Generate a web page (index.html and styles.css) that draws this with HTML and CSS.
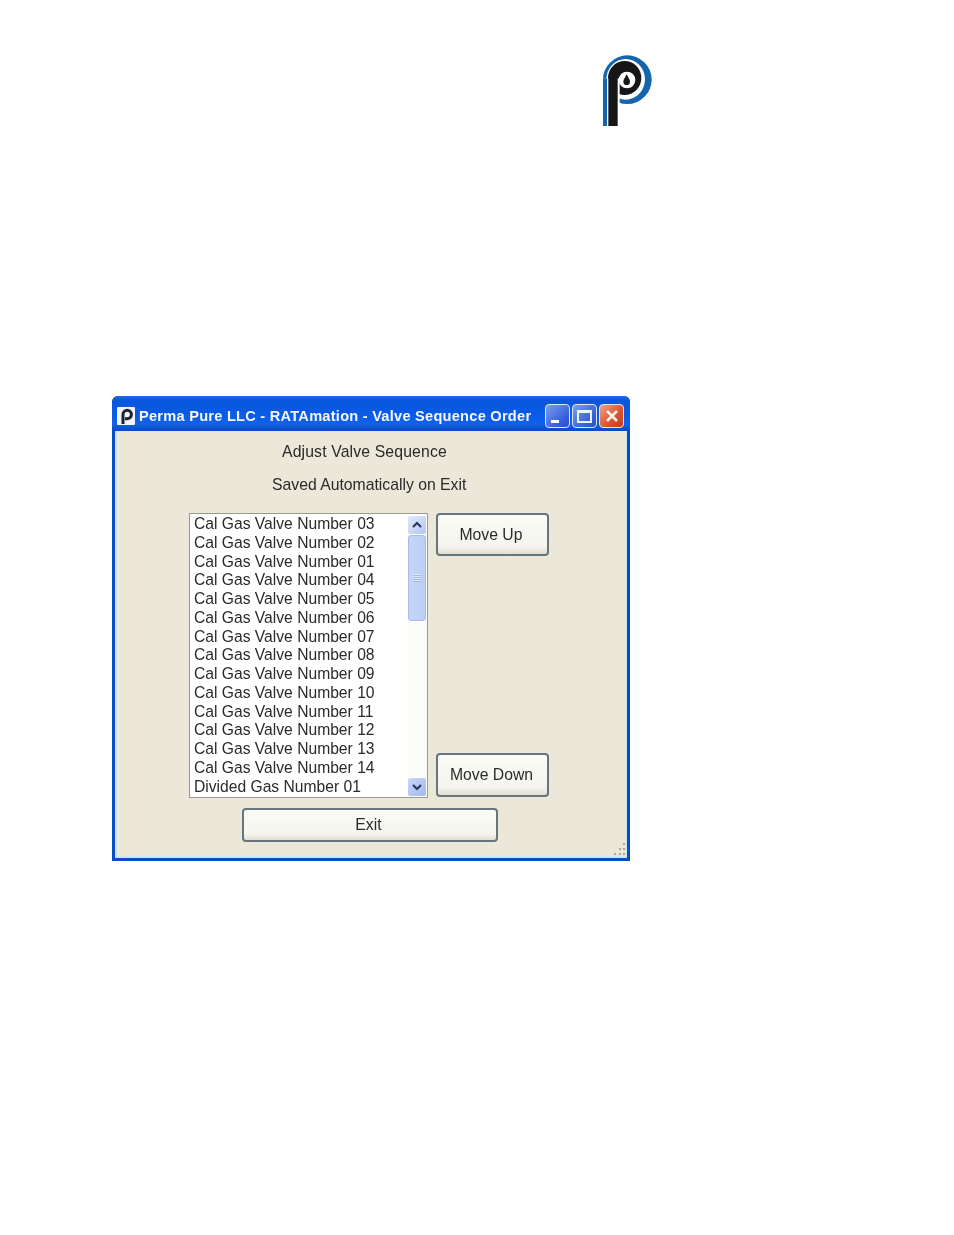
FILE: index.html
```html
<!DOCTYPE html>
<html lang="en">
<head>
<meta charset="utf-8">
<title>Perma Pure LLC - RATAmation - Valve Sequence Order</title>
<link rel="stylesheet" href="styles.css">
</head>
<body>
<div class="page">
  <svg class="logo" viewBox="0 0 225 270" width="75" height="90" aria-label="Perma Pure logo">
    <circle class="l-blue" cx="112" cy="104" r="73"/>
    <ellipse class="l-white" cx="107" cy="103" rx="58" ry="61"/>
    <ellipse class="l-black" cx="104" cy="99" rx="50" ry="51"/>
    <circle class="l-white" cx="111" cy="105" r="25"/>
    <rect class="l-white" x="39" y="100" width="50" height="143"/>
    <rect class="l-blue" x="39" y="100" width="12" height="143"/>
    <rect class="l-black" x="55" y="96" width="28" height="147"/>
    <path class="l-black" d="M110 88C104 100 100 105 100 110A10 10 0 0 0 120 110C120 105 116 100 110 88Z"/>
  </svg>
  <div class="window">
    <div class="titlebar">
      <svg class="app-icon" viewBox="0 0 18 18" width="18" height="18">
        <rect width="18" height="18" rx="1" fill="#f1f4f8"/>
        <path d="M6 17V7.5A4.2 4.2 0 1 1 10.2 11.7H8" fill="none" stroke="#1b2130" stroke-width="3"/>
      </svg>
      <span class="title">Perma Pure LLC - RATAmation - Valve Sequence Order</span>
      <div class="controls">
        <span class="ctl ctl-min"><i class="min-glyph"></i></span>
        <span class="ctl ctl-max"><i class="max-glyph"></i></span>
        <span class="ctl ctl-close">
          <svg viewBox="0 0 14 14" width="14" height="14"><path d="M2 2L12 12M12 2L2 12" stroke="#f8f2ec" stroke-width="2.6" fill="none"/></svg>
        </span>
      </div>
    </div>
    <div class="content">
      <p class="label label-a">Adjust Valve Sequence</p>
      <p class="label label-b">Saved Automatically on Exit</p>
      <div class="main">
        <div class="listbox">
          <ul class="items">
            <li>Cal Gas Valve Number 03</li>
            <li>Cal Gas Valve Number 02</li>
            <li>Cal Gas Valve Number 01</li>
            <li>Cal Gas Valve Number 04</li>
            <li>Cal Gas Valve Number 05</li>
            <li>Cal Gas Valve Number 06</li>
            <li>Cal Gas Valve Number 07</li>
            <li>Cal Gas Valve Number 08</li>
            <li>Cal Gas Valve Number 09</li>
            <li>Cal Gas Valve Number 10</li>
            <li>Cal Gas Valve Number 11</li>
            <li>Cal Gas Valve Number 12</li>
            <li>Cal Gas Valve Number 13</li>
            <li>Cal Gas Valve Number 14</li>
            <li>Divided Gas Number 01</li>
          </ul>
          <div class="scrollbar">
            <span class="sb-btn">
              <svg viewBox="0 0 12 12" width="12" height="12"><path d="M2 8L6 4L10 8" fill="none" stroke="#2c3a5e" stroke-width="2.2"/></svg>
            </span>
            <span class="sb-thumb"><i class="grip"></i></span>
            <span class="sb-track"></span>
            <span class="sb-btn sb-btn-down">
              <svg viewBox="0 0 12 12" width="12" height="12"><path d="M2 4L6 8L10 4" fill="none" stroke="#2c3a5e" stroke-width="2.2"/></svg>
            </span>
          </div>
        </div>
        <div class="side">
          <button class="btn btn-up">Move Up</button>
          <button class="btn btn-down">Move Down</button>
        </div>
      </div>
      <button class="btn btn-exit">Exit</button>
      <svg class="grip-corner" viewBox="0 0 15 13" width="15" height="13">
        <path d="M11 0h2v2h-2zM7 5h2v2H7zM11 5h2v2h-2zM2 10h2v2H2zM7 10h2v2H7zM11 10h2v2h-2z" fill="#aca894"/>
      </svg>
    </div>
  </div>
</div>
</body>
</html>
```
FILE: styles.css
```css
html, body {
  margin: 0;
  padding: 0;
  background: #fff;
}
.page {
  width: 954px;
  height: 1235px;
  padding-top: 45px;
  box-sizing: border-box;
  overflow: hidden;
  font-family: "Liberation Sans", Arial, sans-serif;
  color: #2a2a2a;
}
.logo {
  display: block;
  margin-left: 590px;
  filter: blur(0.3px);
}
.l-blue { fill: #1465ae; }
.l-white { fill: #fff; }
.l-black { fill: #161616; }

.window {
  position: relative;
  margin: 261px 0 0 112px;
  width: 518px;
  height: 465px;
  box-sizing: border-box;
  background: #ebe7d9;
  border: 3px solid #0a4cc4;
  border-top: 0;
  border-radius: 6px 6px 0 0;
  filter: blur(0.4px);
}
.titlebar {
  display: flex;
  align-items: center;
  height: 35px;
  margin: 0 -3px;
  padding: 5px 6px 0 5px;
  box-sizing: border-box;
  border-radius: 6px 6px 0 0;
  background: linear-gradient(#1a6bea 0, #0a57dc 12%, #0a5ae6 50%, #0e62ec 80%, #0a48c4 100%);
}
.app-icon {
  flex: none;
  margin-right: 4px;
}
.title {
  flex: 1;
  min-width: 0;
  color: #f4f7fd;
  font-weight: 700;
  font-size: 14.6px;
  letter-spacing: 0.25px;
  white-space: nowrap;
}
.controls {
  flex: none;
  display: flex;
  gap: 2px;
}
.ctl {
  display: flex;
  width: 25px;
  height: 24px;
  box-sizing: border-box;
  border: 1px solid #dfe8fb;
  border-radius: 4px;
  background: linear-gradient(135deg, #7b9eec, #3560dc 70%, #2a50c8);
  position: relative;
  align-items: center;
  justify-content: center;
}
.ctl-close {
  background: linear-gradient(135deg, #f0a088, #d9532e 60%, #c23c20);
}
.min-glyph {
  position: absolute;
  left: 5px;
  bottom: 4px;
  width: 8px;
  height: 3px;
  background: #fff;
}
.max-glyph {
  width: 15px;
  height: 13px;
  box-sizing: border-box;
  border: 2px solid #eef3fd;
  border-top-width: 3px;
}
.content {
  position: relative;
  height: 427px;
  box-shadow: inset 2px 0 0 #cfe0f3, inset -1px 0 0 #cfe0f3, inset 0 -2px 0 #d4e2f2;
}
.label {
  margin: 0;
  font-size: 15.75px;
  line-height: 20px;
  white-space: nowrap;
}
.label-a {
  padding: 11px 0 0 167px;
  letter-spacing: 0.15px;
}
.label-b {
  padding: 13px 0 0 157px;
}
.main {
  display: flex;
  gap: 8px;
  margin: 18px 0 0 74px;
}
.listbox {
  display: flex;
  width: 239px;
  height: 285px;
  box-sizing: border-box;
  border: 1px solid #9a9a92;
  background: #fff;
}
.items {
  flex: 1;
  margin: 0;
  padding: 1px 0 0 4px;
  list-style: none;
  font-size: 15.65px;
  line-height: 18.75px;
  white-space: nowrap;
}
.scrollbar {
  display: flex;
  flex-direction: column;
  width: 18px;
  margin: 2px 1px 1px 0;
  gap: 1px;
}
.sb-btn {
  flex: none;
  display: flex;
  align-items: center;
  justify-content: center;
  height: 18px;
  border-radius: 2px;
  background: linear-gradient(135deg, #e2eafc, #b3c6f2);
}
.sb-btn-down {
  background: linear-gradient(135deg, #c9d7f8, #a2b8ee);
}
.sb-thumb {
  flex: none;
  display: flex;
  align-items: center;
  justify-content: center;
  height: 86px;
  box-sizing: border-box;
  border: 1px solid #a8bae6;
  border-radius: 3px;
  background: linear-gradient(90deg, #c6d5fa, #bccdf6);
}
.grip {
  display: block;
  width: 7px;
  height: 8px;
  background: repeating-linear-gradient(#dfe7fb 0 1px, #a4b6e4 1px 2px);
}
.sb-track {
  flex: 1;
  background: #fbfbf8;
}
.side {
  display: flex;
  flex-direction: column;
  justify-content: space-between;
  height: 284px;
}
.btn {
  display: block;
  padding: 0;
  box-sizing: border-box;
  font: 15.75px "Liberation Sans", Arial, sans-serif;
  color: #2a2a2a;
  border: 2px solid #66757e;
  border-radius: 4px;
  background: linear-gradient(#fbfbf7, #f5f4ee 80%, #e2dfd2);
}
.btn-up {
  width: 113px;
  height: 43px;
  padding-right: 3px;
}
.btn-down {
  width: 113px;
  height: 44px;
  padding-right: 2px;
}
.btn-exit {
  width: 256px;
  height: 34px;
  margin: 10px 0 0 127px;
  padding-right: 3px;
}
.grip-corner {
  position: absolute;
  right: 0;
  bottom: 2px;
}
```
